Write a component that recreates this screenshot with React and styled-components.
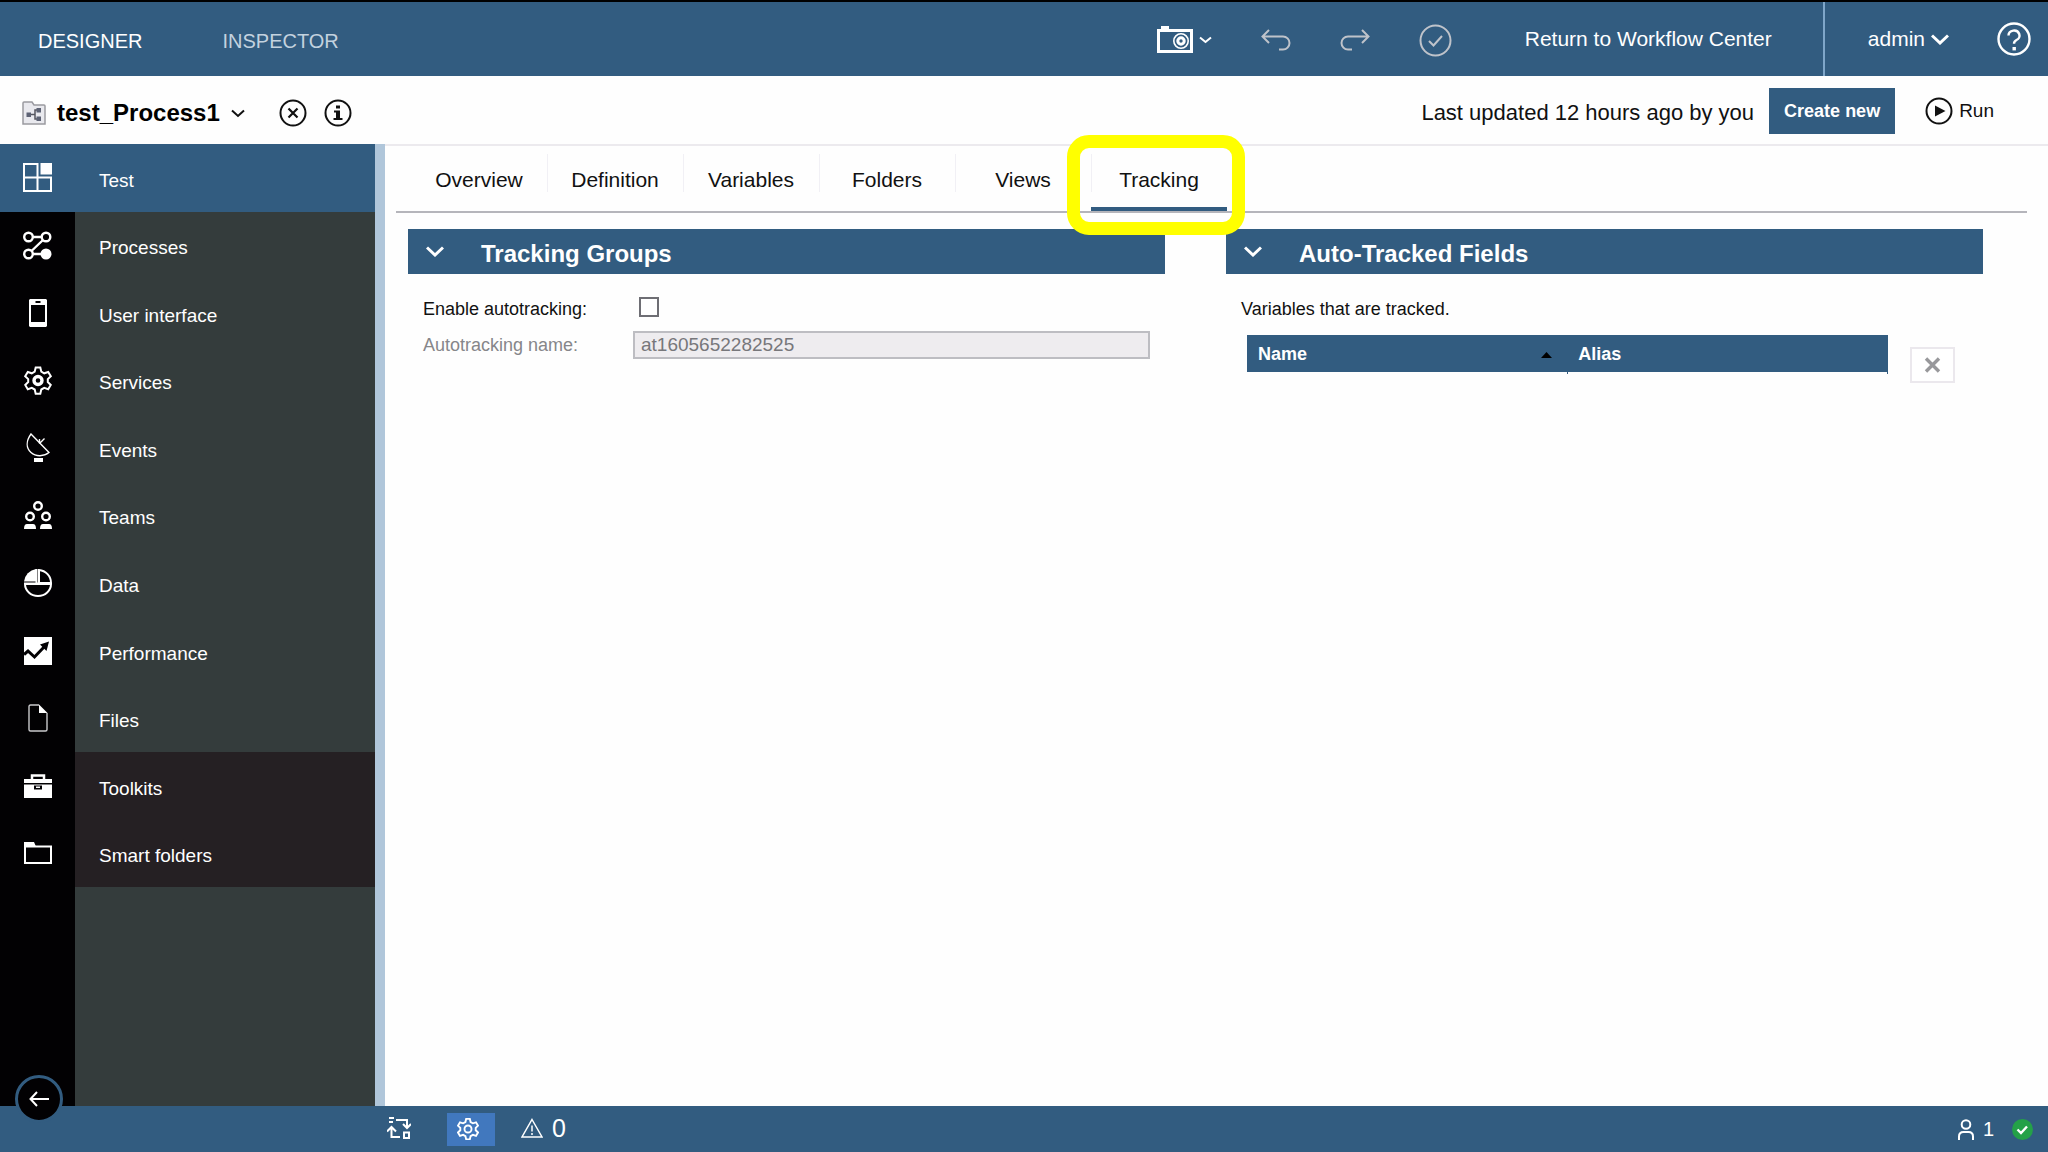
import React, { Component } from "react";
import styled, { createGlobalStyle, ThemeProvider } from "styled-components";

const theme = {
	blue: "#325c80",
	pale_blue: "#b0c6da",
	menu: "#343c3c",
	menu_dark: "#252023",
	font_size_content: "18px",
	font_size_menu: "19px",
	font_size_bar: "21px",
	font_size_title: "24px",
};

const GlobalStyle = createGlobalStyle`
	* {
		box-sizing: border-box;
	}
	body {
		margin: 0;
		background: #fefefe;
		color: #111;
		font-family: "Liberation Sans", Arial, sans-serif;
	}
	button, input {
		font-family: inherit;
		font-size: inherit;
		color: inherit;
	}
	button {
		padding: 0;
		border: 0;
		background: none;
		cursor: pointer;
	}
	a {
		color: inherit;
		text-decoration: none;
	}
	svg {
		display: block;
		flex: none;
	}
`;

const Page = styled.div`
	display: flex;
	flex-direction: column;
	min-height: 100vh;
`;

/* ---------- top bar ---------- */

const TopBar = styled.header`
	display: flex;
	align-items: stretch;
	height: 76px;
	border-top: 2px solid #000;
	background: ${props => props.theme.blue};
	color: #fff;
	font-size: ${props => props.theme.font_size_bar};
`;

const ModeNav = styled.nav`
	display: flex;
	align-items: center;
	gap: 80px;
	flex: 1;
	padding: 4px 0 0 38px;
	font-size: 20px;
`;

const ModeLink = styled.a`
	color: ${props => (props.$active ? "#fff" : "#c3d2df")};
`;

const TopTools = styled.div`
	display: flex;
	align-items: center;
	gap: 49px;
	margin-right: 73px;
	padding-top: 2px;
`;

const IconButton = styled.button`
	display: flex;
	align-items: center;
	gap: 6px;
	color: ${props => (props.$muted ? "#bfc3ca" : "inherit")};
`;

const ReturnLink = styled.a`
	display: flex;
	align-items: center;
	padding-right: 51px;
	border-right: 2px solid #7fa6c9;
`;

const UserArea = styled.div`
	display: flex;
	align-items: center;
	gap: 48px;
	padding: 0 17px 0 43px;
`;

/* ---------- project bar ---------- */

const ProjectBar = styled.div`
	display: flex;
	align-items: center;
	height: 68px;
	padding: 6px 54px 0 22px;
`;

const ProjectName = styled.h1`
	margin: 0 11px;
	color: #000;
	font-size: ${props => props.theme.font_size_title};
	line-height: 28px;
`;

const ProjectActions = styled.div`
	display: flex;
	gap: 17px;
	flex: 1;
	margin-left: 34px;
`;

const Updated = styled.span`
	margin-right: 15px;
	font-size: 22px;
	line-height: 28px;
`;

const ProjectButtons = styled.div`
	display: flex;
	gap: 30px;
	padding-bottom: 4px;
`;

const CreateButton = styled.button`
	height: 46px;
	padding: 0 15px;
	background: ${props => props.theme.blue};
	color: #fff;
	font-size: ${props => props.theme.font_size_content};
	font-weight: bold;
`;

const RunButton = styled(IconButton)`
	font-size: ${props => props.theme.font_size_menu};
`;

/* ---------- side menu ---------- */

const Main = styled.div`
	display: flex;
	flex: 1;
`;

const Sidebar = styled.nav`
	display: flex;
	flex-direction: column;
	justify-content: space-between;
	width: 385px;
	border-right: 10px solid ${props => props.theme.pale_blue};
	background: linear-gradient(to right, #020103 75px, ${props => props.theme.menu} 75px);
	color: #fff;
	font-size: ${props => props.theme.font_size_menu};
`;

const MenuList = styled.ul`
	display: grid;
	grid-auto-rows: 1fr;
	height: 743px;
	margin: 0;
	padding: 0;
	list-style: none;
`;

const MenuLink = styled.a`
	display: grid;
	grid-template-columns: 75px 1fr;
	height: 100%;
	background: ${props => (props.$active ? props.theme.blue : "none")};

	.menu_icon {
		display: flex;
		align-items: center;
		justify-content: center;
	}
	.menu_label {
		display: flex;
		align-items: center;
		padding: 6px 0 0 24px;
		background: ${props => (props.$dark ? props.theme.menu_dark : "none")};
	}
`;

const CollapseButton = styled.button`
	position: relative;
	z-index: 1;
	display: flex;
	align-items: center;
	justify-content: center;
	width: 48px;
	height: 48px;
	margin: 0 0 -17px 15px;
	border: 3px solid ${props => props.theme.blue};
	border-radius: 50%;
	background: #020103;
`;

/* ---------- editor ---------- */

const Editor = styled.main`
	flex: 1;
	border-top: 2px solid #eceaee;
`;

const Tabs = styled.div`
	display: flex;
	height: 67px;
	margin: 0 21px 0 11px;
	padding-left: 15px;
	border-bottom: 2px solid #b5b5bb;
`;

const Tab = styled.button`
	position: relative;
	width: 136px;
	padding-top: 7px;
	border-bottom: 4px solid ${props => (props.$active ? props.theme.blue : "transparent")};
	background: linear-gradient(#f1f0f5, #f1f0f5) 0 8px / ${props => (props.$first ? "0" : "1px")} 38px no-repeat;
	font-size: ${props => props.theme.font_size_bar};
`;

/* marker drawn over the tab that the reader has to look at */
const Highlight = styled.span`
	position: absolute;
	inset: -11px -18px -28px -24px;
	z-index: 2;
	border: 13px solid #ff0;
	border-radius: 22px;
	pointer-events: none;
`;

const Panels = styled.div`
	display: grid;
	grid-template-columns: 1fr 1fr;
	gap: 61px;
	padding: 16px 65px 0 23px;
	font-size: ${props => props.theme.font_size_content};
`;

const PanelHeader = styled.header`
	display: flex;
	align-items: center;
	gap: 37px;
	height: 45px;
	padding-left: 18px;
	background: ${props => props.theme.blue};
	color: #fff;

	h2 {
		margin: 0;
		padding-top: 4px;
		font-size: ${props => props.theme.font_size_title};
		line-height: 28px;
	}
`;

const PanelBody = styled.div`
	padding: 21px 15px 0;
`;

const FormRow = styled.div`
	display: grid;
	grid-template-columns: 210px 1fr;
	align-items: center;
	height: ${props => props.$height};

	label {
		color: ${props => (props.$disabled ? "#86868a" : "#111")};
	}
`;

const Checkbox = styled.input`
	appearance: none;
	width: 20px;
	height: 20px;
	margin: 0 0 4px 6px;
	border: 2px solid #6e6e74;
	background: #fff;
`;

const TextBox = styled.input`
	width: 100%;
	height: 28px;
	padding: 0 6px;
	border: 2px solid #bdbdc2;
	background: #eeecef;
	color: #77777b;
	font-size: ${props => props.theme.font_size_menu};
`;

const Note = styled.p`
	margin: 0 0 12px;
	line-height: 28px;
`;

const TableRow = styled.div`
	display: flex;
	gap: 22px;
	padding: 0 13px 0 6px;
`;

const FieldTable = styled.table`
	flex: 1;
	width: 100%;
	align-self: flex-start;
	border-collapse: collapse;
	table-layout: fixed;

	th {
		height: 37px;
		padding: 2px 11px 0;
		background: ${props => props.theme.blue};
		color: #fff;
		text-align: left;
	}
	/* the table has no rows yet, only the ends of its column lines */
	td {
		height: 2px;
		padding: 0;
		border-right: 1px solid ${props => props.theme.blue};
	}
	.sortable {
		display: flex;
		align-items: center;
		justify-content: space-between;
		width: 100%;
		padding-right: 4px;
		font-weight: bold;
	}
`;

const RemoveButton = styled.button`
	display: flex;
	flex: none;
	align-items: center;
	justify-content: center;
	width: 45px;
	height: 36px;
	margin-top: 12px;
	border: 2px solid #ebe8ed;
	background: #fff;
	color: #98989b;
`;

/* ---------- status bar ---------- */

const StatusBar = styled.footer`
	display: flex;
	align-items: center;
	height: 46px;
	padding: 0 15px 2px 387px;
	background: ${props => props.theme.blue};
	color: #fff;
`;

const StatusButton = styled.button`
	display: flex;
	align-items: center;
	justify-content: center;
	width: 48px;
	height: 33px;
	margin: 2px 26px 0 36px;
	padding-right: 6px;
	background: #4178be;
`;

const StatusCount = styled.span`
	display: flex;
	align-items: center;
	gap: 9px;
	font-size: ${props => props.$size};
`;

const StatusRight = styled.div`
	display: flex;
	align-items: center;
	gap: 18px;
	margin-left: auto;
	padding-top: 2px;
`;

/* ---------- icons ---------- */

const Svg = ({ w, h, sw = 2, children }) => (
	<svg width={w} height={h} viewBox={`0 0 ${w} ${h}`} fill="none" stroke="currentColor" strokeWidth={sw} aria-hidden="true">
		{children}
	</svg>
);

const Chevron = ({ w = 18, h = 11, sw = 3 }) => (
	<Svg w={w} h={h} sw={sw}>
		<path d={`M1 1.5 L${w / 2} ${h - 2} L${w - 1} 1.5`} />
	</Svg>
);

const CameraIcon = () => (
	<Svg w={36} h={28} sw={3}>
		<path d="M4 0h8v4H4z" fill="currentColor" stroke="none" />
		<path d="M1.5 4.5h33v21h-33z" />
		<circle cx="24" cy="15" r="7.2" strokeWidth="1.6" />
		<circle cx="24" cy="15" r="3.2" strokeWidth="3" />
	</Svg>
);

const UndoIcon = () => (
	<Svg w={30} h={22}>
		<path d="M8 1 L1.5 7.5 L8 14 M1.5 7.5 H22 a6.5 6.5 0 0 1 0 13 H18" />
	</Svg>
);

const RedoIcon = () => (
	<Svg w={30} h={22}>
		<path d="M22 1 L28.5 7.5 L22 14 M28.5 7.5 H8 a6.5 6.5 0 0 0 0 13 H12" />
	</Svg>
);

const ValidateIcon = () => (
	<Svg w={33} h={33}>
		<circle cx="16.5" cy="16.5" r="15" />
		<path d="M10 17 l4.5 4.5 L23 12" />
	</Svg>
);

const HelpIcon = () => (
	<Svg w={34} h={34} sw={2.4}>
		<circle cx="17" cy="17" r="15.5" />
		<path d="M11.5 13.5 a5.5 5 0 1 1 8 4.5 q-2.5 1.3 -2.5 3.8" />
		<path d="M15.5 25h3.4v3.4h-3.4z" fill="currentColor" stroke="none" />
	</Svg>
);

const ProjectIcon = () => (
	<Svg w={24} h={24} sw={1.5}>
		<path d="M1 23 V2 q0-1 1-1 h8 l2 3 h10 q1 0 1 1 V23z" fill="#e9e9ee" stroke="#9a9aa0" />
		<path d="M7 13.5h6M17 9h-4v9h4" stroke="#55565f" />
		<path d="M4.5 11.5h4.5v4.5H4.5zM14.5 7h4.5v4.5h-4.5zM14.5 15.5h4.5V20h-4.5z" fill="#5d6274" stroke="none" />
	</Svg>
);

const CloseCircle = () => (
	<Svg w={28} h={28}>
		<circle cx="14" cy="14" r="12.5" />
		<path d="M9.5 9.5l9 9M18.5 9.5l-9 9" strokeWidth="2.2" />
	</Svg>
);

const InfoCircle = () => (
	<Svg w={28} h={28}>
		<circle cx="14" cy="14" r="12.5" />
		<path d="M12 6.5h4v3h-4zM10 11.5h6v7.5h2.5v2H9.5v-2H12v-5.5h-2z" fill="currentColor" stroke="none" />
	</Svg>
);

const PlayCircle = () => (
	<Svg w={28} h={28}>
		<circle cx="14" cy="14" r="12.5" />
		<path d="M10 8.5 L20.5 14 L10 19.5z" fill="currentColor" stroke="none" />
	</Svg>
);

// six toothed wheel, shared by the side menu and the status bar
const gear = "M14 1 h2.3 l1 4.2 2.9 1.6 4-1.3 2.6 4.3 -3 2.8 v3 l3 2.8 -2.6 4.3 -4-1.3 -2.9 1.6 -1 4.2 h-4.6 l-1-4.2 -2.9-1.6 -4 1.3 -2.6-4.3 3-2.8 v-3 l-3-2.8 2.6-4.3 4 1.3 2.9-1.6 1-4.2z";

const menuIcons = {
	test: (
		<Svg w={29} h={29}>
			<path d="M1 1h13.5v13.5H1zM1 14.5h13.5V28H1zM14.5 14.5H28V28H14.5z" />
			<path d="M17.5 0H29v11.5H17.5z" fill="currentColor" stroke="none" />
		</Svg>
	),
	processes: (
		<Svg w={29} h={29} sw={2.4}>
			<circle cx="5.5" cy="6" r="4.3" />
			<circle cx="23" cy="6" r="4.3" />
			<circle cx="5.5" cy="23" r="4.3" />
			<circle cx="23" cy="23" r="5.5" fill="currentColor" stroke="none" />
			<path d="M10 6h9M20 9 L8.5 20M10 23h9" />
		</Svg>
	),
	ui: (
		<Svg w={18} h={28}>
			<path d="M1 0h16l1 1v26l-1 1H1l-1-1V1zM2 6v17h14V6zM6.5 2v2h5V2z" fill="currentColor" fillRule="evenodd" stroke="none" />
		</Svg>
	),
	services: (
		<Svg w={28} h={29}>
			<path d={gear} transform="translate(0 .5)" />
			<circle cx="14" cy="14.5" r="4" strokeWidth="3.4" />
		</Svg>
	),
	events: (
		<Svg w={24} h={30} sw={1.4}>
			<path d="M5 1 C0 8 0 15 5 19.5 C10 24 18 23.5 23 19.5z" />
			<path d="M13.5 6v4.5M13.5 10.5 L18.5 5.5" />
			<path d="M8 25h9v4H8z" fill="currentColor" stroke="none" />
		</Svg>
	),
	teams: (
		<Svg w={28} h={28} sw={2.4}>
			<circle cx="14" cy="5" r="3.8" />
			<circle cx="6" cy="15.5" r="3.8" />
			<circle cx="22" cy="15.5" r="3.8" />
			<path d="M0 28q0-5 3-5h6q3 0 3 5zM16 28q0-5 3-5h6q3 0 3 5z" fill="currentColor" stroke="none" />
		</Svg>
	),
	data: (
		<Svg w={28} h={28}>
			<path d="M12 0 A14 14 0 0 0 0 12.5h12z" fill="currentColor" stroke="none" />
			<path d="M15 1 a13 13 0 0 1 12 13H15zM12.5 0v14M1 15a13 12 0 0 0 26 0zM0 14.5h28" />
		</Svg>
	),
	performance: (
		<Svg w={28} h={28}>
			<path d="M0 0h28v28H0z" fill="currentColor" stroke="none" />
			<path d="M0 17.5l4-3.5 6.5 6L21 9" stroke="#020103" strokeWidth="3" />
			<path d="M16 7.5l9-3-2.5 9.5z" fill="#020103" stroke="none" />
		</Svg>
	),
	files: (
		<Svg w={20} h={28} sw={1.4}>
			<path d="M11 1H2.5Q1 1 1 2.5v23Q1 27 2.5 27h15q1.5 0 1.5-1.5V9" stroke="#c9c9cc" />
			<path d="M11 .5 L19.5 9H11z" fill="currentColor" stroke="none" />
		</Svg>
	),
	toolkits: (
		<Svg w={28} h={24}>
			<path d="M8 5V1.5h12V5" strokeWidth="2.5" />
			<path d="M0 5h28v4H0zM0 10.5h28V24H0zM10 11.5v4h8v-4zM12 12.5v1.5h4v-1.5z" fill="currentColor" fillRule="evenodd" stroke="none" />
		</Svg>
	),
	folders: (
		<Svg w={28} h={22}>
			<path d="M1 4.5h26V21H1z" />
			<path d="M0 0h10l2 4.5H0z" fill="currentColor" stroke="none" />
		</Svg>
	),
};

const BackArrow = () => (
	<Svg w={20} h={16}>
		<path d="M8 1 L1.5 8 L8 15M1.5 8H20" />
	</Svg>
);

const TransferIcon = () => (
	<Svg w={24} h={22}>
		<path d="M2 1h5M2 5h4M9 3h11v7M16 7l4 4 4-4M13 20H4.5V11M0 14.5L4.5 10 9 14.5M17 15.5h5V21h-5z" />
	</Svg>
);

const StatusGear = () => (
	<svg width="22" height="22" viewBox="0 0 28 28" fill="none" stroke="currentColor" strokeWidth="2.4" aria-hidden="true">
		<path d={gear} />
		<circle cx="14" cy="14" r="4.5" />
	</svg>
);

const WarningIcon = () => (
	<Svg w={22} h={20} sw={1.5}>
		<path d="M11 1.5L21 19H1zM11 7.5v6M11 15v2" />
	</Svg>
);

const PersonIcon = () => (
	<Svg w={16} h={21}>
		<circle cx="8" cy="5.5" r="4.3" />
		<path d="M1 21v-3.500q0-4.500 4.500-4.500h5q4.500 0 4.500 4.500V21" />
	</Svg>
);

const OkIcon = () => (
	<Svg w={21} h={21}>
		<circle cx="10.5" cy="10.5" r="10.5" fill="#24a148" stroke="none" />
		<path d="M5.5 10.5l3.5 3.5 6-6.5" strokeWidth="2.4" />
	</Svg>
);

const menu = [
	{ icon: "test", label: "Test" },
	{ icon: "processes", label: "Processes" },
	{ icon: "ui", label: "User interface" },
	{ icon: "services", label: "Services" },
	{ icon: "events", label: "Events" },
	{ icon: "teams", label: "Teams" },
	{ icon: "data", label: "Data" },
	{ icon: "performance", label: "Performance" },
	{ icon: "files", label: "Files" },
	{ icon: "toolkits", label: "Toolkits", dark: true },
	{ icon: "folders", label: "Smart folders", dark: true },
];

const tabs = ["Overview", "Definition", "Variables", "Folders", "Views", "Tracking"];

const Panel = ({ title, children }) => (
	<section>
		<PanelHeader>
			<IconButton aria-label={"Collapse " + title}>
				<Chevron />
			</IconButton>
			<h2>{title}</h2>
		</PanelHeader>
		<PanelBody>{children}</PanelBody>
	</section>
);

class App extends Component {
	state = {
		tab: "Tracking",
		autotracking: false,
		autotracking_name: "at1605652282525",
	};

	handleAutotracking = (e) => {
		this.setState({ autotracking: e.target.checked });
	};

	handleNameChange = (e) => {
		this.setState({ autotracking_name: e.target.value });
	};

	render() {
		const { tab, autotracking, autotracking_name } = this.state;
		return (
			<ThemeProvider theme={theme}>
				<GlobalStyle />
				<Page>
					<TopBar>
						<ModeNav>
							<ModeLink href="#designer" $active>DESIGNER</ModeLink>
							<ModeLink href="#inspector">INSPECTOR</ModeLink>
						</ModeNav>
						<TopTools>
							<IconButton aria-label="Snapshot">
								<CameraIcon />
								<Chevron w={13} h={8} sw={2} />
							</IconButton>
							<IconButton $muted aria-label="Undo"><UndoIcon /></IconButton>
							<IconButton $muted aria-label="Redo"><RedoIcon /></IconButton>
							<IconButton $muted aria-label="Validate"><ValidateIcon /></IconButton>
						</TopTools>
						<ReturnLink href="#center">Return to Workflow Center</ReturnLink>
						<UserArea>
							<IconButton>
								admin
								<Chevron />
							</IconButton>
							<IconButton aria-label="Help"><HelpIcon /></IconButton>
						</UserArea>
					</TopBar>

					<ProjectBar>
						<ProjectIcon />
						<ProjectName>test_Process1</ProjectName>
						<IconButton aria-label="Switch project"><Chevron w={14} h={9} sw={2} /></IconButton>
						<ProjectActions>
							<IconButton aria-label="Close"><CloseCircle /></IconButton>
							<IconButton aria-label="Details"><InfoCircle /></IconButton>
						</ProjectActions>
						<Updated>Last updated 12 hours ago by you</Updated>
						<ProjectButtons>
							<CreateButton>Create new</CreateButton>
							<RunButton>
								<PlayCircle />
								Run
							</RunButton>
						</ProjectButtons>
					</ProjectBar>

					<Main>
						<Sidebar>
							<MenuList>
								{menu.map(item => (
									<li key={item.icon}>
										<MenuLink href={"#" + item.icon} $active={item.icon === "test"} $dark={item.dark}>
											<span className="menu_icon">{menuIcons[item.icon]}</span>
											<span className="menu_label">{item.label}</span>
										</MenuLink>
									</li>
								))}
							</MenuList>
							<CollapseButton aria-label="Collapse menu"><BackArrow /></CollapseButton>
						</Sidebar>

						<Editor>
							<Tabs role="tablist">
								{tabs.map((name, i) => (
									<Tab
										key={name}
										role="tab"
										aria-selected={tab === name}
										$active={tab === name}
										$first={i === 0}
										onClick={() => this.setState({ tab: name })}
									>
										{name}
										{name === "Tracking" && <Highlight />}
									</Tab>
								))}
							</Tabs>

							<Panels>
								<Panel title="Tracking Groups">
									<FormRow $height="28px">
										<label htmlFor="autotracking">Enable autotracking:</label>
										<Checkbox
											type="checkbox" id="autotracking"
											checked={autotracking}
											onChange={this.handleAutotracking} />
									</FormRow>
									<FormRow $height="44px" $disabled={!autotracking}>
										<label htmlFor="autotracking_name">Autotracking name:</label>
										<TextBox
											type="text" id="autotracking_name"
											value={autotracking_name}
											disabled={!autotracking}
											onChange={this.handleNameChange} />
									</FormRow>
								</Panel>

								<Panel title="Auto-Tracked Fields">
									<Note>Variables that are tracked.</Note>
									<TableRow>
										<FieldTable>
											<thead>
												<tr>
													<th>
														<button className="sortable">
															Name
															<svg width="11" height="6" viewBox="0 0 11 6" aria-hidden="true">
																<path d="M5.5 0L11 6H0z" fill="#000" />
															</svg>
														</button>
													</th>
													<th>Alias</th>
												</tr>
											</thead>
											<tbody>
												<tr>
													<td />
													<td />
												</tr>
											</tbody>
										</FieldTable>
										<RemoveButton aria-label="Remove">
											<Svg w={17} h={16} sw={3.4}>
												<path d="M2 1.5L15 14.5M15 1.5L2 14.5" />
											</Svg>
										</RemoveButton>
									</TableRow>
								</Panel>
							</Panels>
						</Editor>
					</Main>

					<StatusBar>
						<IconButton aria-label="Transfer"><TransferIcon /></IconButton>
						<StatusButton aria-label="Settings"><StatusGear /></StatusButton>
						<StatusCount $size="25px">
							<WarningIcon />
							0
						</StatusCount>
						<StatusRight>
							<StatusCount $size="20px">
								<PersonIcon />
								1
							</StatusCount>
							<OkIcon />
						</StatusRight>
					</StatusBar>
				</Page>
			</ThemeProvider>
		);
	}
}

export default App;
